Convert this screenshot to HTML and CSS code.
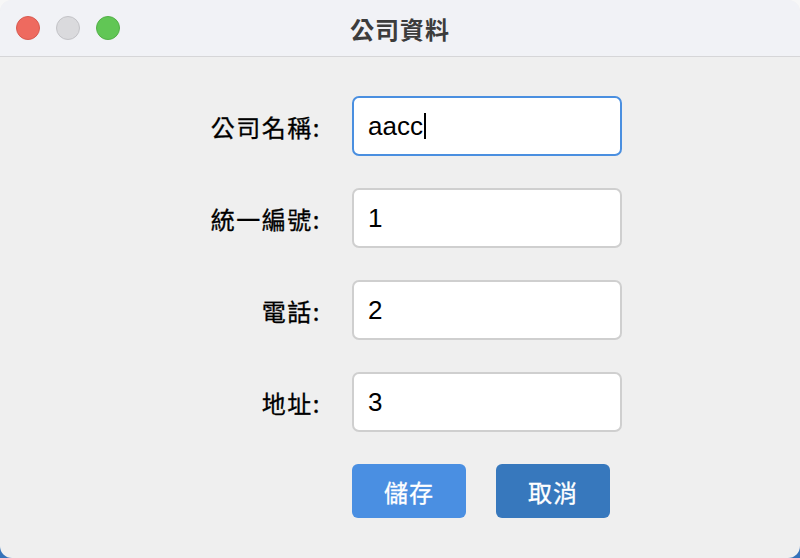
FILE: index.html
```html
<!DOCTYPE html>
<html lang="zh-Hant">
<head>
<meta charset="utf-8">
<title>公司資料</title>
<link rel="stylesheet" href="styles.css">
</head>
<body>
<div class="window">
  <div class="titlebar">
    <div class="lights">
      <span class="light red"></span>
      <span class="light gray"></span>
      <span class="light green"></span>
    </div>
    <div class="title">公司資料</div>
  </div>
  <div class="content">
    <form class="form">
      <label class="label">公司名稱:</label>
      <div class="field focused"><span class="val">aacc</span><span class="caret"></span></div>
      <label class="label">統一編號:</label>
      <div class="field"><span class="val">1</span></div>
      <label class="label">電話:</label>
      <div class="field"><span class="val">2</span></div>
      <label class="label">地址:</label>
      <div class="field"><span class="val">3</span></div>
      <div class="buttons">
        <button type="button" class="btn save">儲存</button>
        <button type="button" class="btn cancel">取消</button>
      </div>
    </form>
  </div>
</div>
</body>
</html>
```

FILE: styles.css
```css
html, body {
  margin: 0;
  padding: 0;
  width: 800px;
  height: 558px;
  overflow: hidden;
}
body {
  background: linear-gradient(to bottom, #f7f7f7 0%, #f7f7f7 50%, #3572ba 50%, #3572ba 100%);
  font-family: "Noto Sans CJK TC", "Noto Sans CJK SC", sans-serif;
}
.window {
  width: 800px;
  height: 558px;
  border-radius: 12px;
  overflow: hidden;
  background: #efefef;
  display: flex;
  flex-direction: column;
}
.titlebar {
  height: 56px;
  flex: none;
  background: #f1f2f6;
  border-bottom: 1px solid #d6d6d8;
  position: relative;
  display: flex;
  align-items: center;
  justify-content: center;
}
.lights {
  position: absolute;
  left: 16px;
  top: 16px;
  display: flex;
  gap: 16px;
}
.light {
  width: 24px;
  height: 24px;
  border-radius: 50%;
  box-sizing: border-box;
}
.red { background: #ee6a5f; border: 1px solid #d85a50; }
.gray { background: #dadadd; border: 1px solid #c3c3c7; }
.green { background: #61c655; border: 1px solid #52b047; }
.title {
  font-size: 24px;
  font-weight: 700;
  color: #3c3c3c;
  letter-spacing: 1px;
}
.content {
  flex: 1;
  padding-top: 39px;
}
.form {
  display: grid;
  grid-template-columns: 320px 270px;
  column-gap: 32px;
  row-gap: 32px;
  grid-auto-rows: 60px;
  margin: 0;
}
.label {
  display: flex;
  align-items: center;
  justify-content: flex-end;
  font-size: 24px;
  font-weight: 400;
  letter-spacing: 1.5px;
  color: #000;
  margin-right: -1px;
  -webkit-text-stroke: 0.3px #000;
}
.field {
  box-sizing: border-box;
  height: 60px;
  background: #fff;
  border: 2px solid #cfcfcf;
  border-radius: 7px;
  display: flex;
  align-items: center;
  padding-left: 14px;
}
.field.focused {
  border-color: #4a8fe0;
}
.val {
  font-family: "Liberation Sans", Arial, sans-serif;
  font-size: 26px;
  color: #000;
}
.caret {
  width: 2px;
  height: 26px;
  background: #000;
  margin-left: 1px;
}
.buttons {
  grid-column: 2;
  display: flex;
  gap: 30px;
  height: 54px;
}
.btn {
  width: 114px;
  height: 54px;
  border: none;
  border-radius: 6px;
  color: #fff;
  font-family: "Noto Sans CJK TC", "Noto Sans CJK SC", sans-serif;
  font-size: 24px;
  font-weight: 400;
  letter-spacing: 1px;
  padding: 0;
  -webkit-text-stroke: 0.3px #fff;
}
.save { background: #4a8fe2; }
.cancel { background: #3778bd; }
```
